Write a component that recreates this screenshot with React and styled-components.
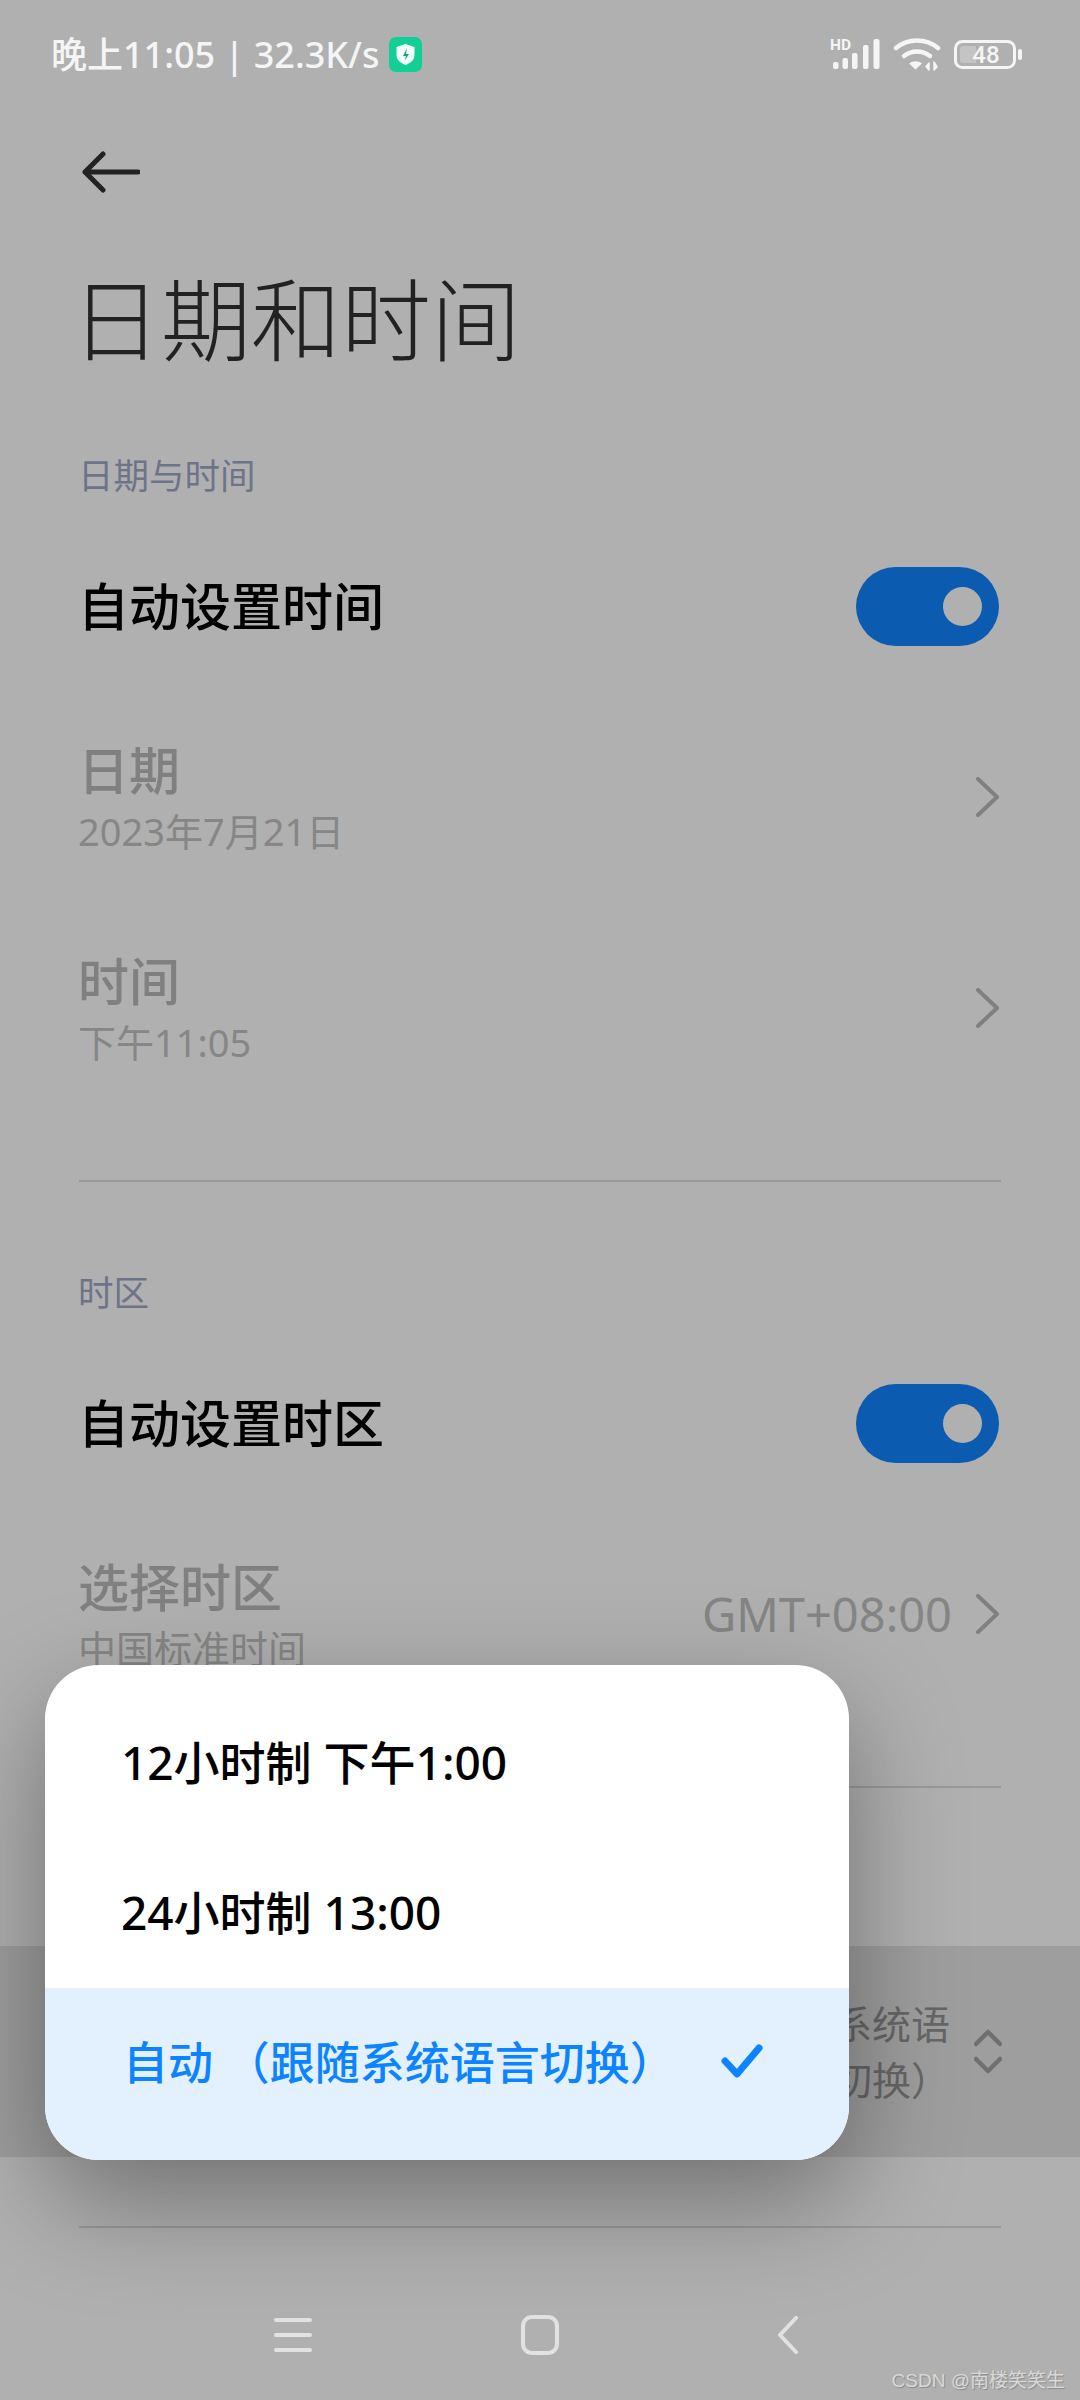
import React from 'react'
import styled, { createGlobalStyle } from 'styled-components'

const GlobalStyle = createGlobalStyle`
  html, body {
    margin: 0;
    padding: 0;
    background: #b0b0b0;
  }
`

const Page = styled.div`
  position: relative;
  width: 1080px;
  height: 2400px;
  overflow: hidden;
  background: #b0b0b0;
  font-family: "Noto Sans", "Noto Sans CJK SC", sans-serif;
`

const StatusBar = styled.div`
  height: 108px;
  padding: 0 52px 0 51px;
  display: flex;
  align-items: center;
  justify-content: space-between;
  color: #f5f5f5;
`

const StatusLeft = styled.div`
  display: flex;
  align-items: center;
  gap: 10px;
  font-size: 36px;
  font-weight: 500;
  white-space: nowrap;
`

const StatusText = styled.span`
  margin-bottom: 4px;
`

const StatusIcons = styled.div`
  display: flex;
  align-items: center;
  margin-right: 4px;
  gap: 13px;
`

const BackRow = styled.div`
  height: 128px;
  padding-left: 82px;
  display: flex;
  align-items: center;
`

const Title = styled.h1`
  margin: 0;
  height: 170px;
  padding-left: 71px;
  font-size: 90px;
  font-weight: 300;
  line-height: 167px;
  color: #222;
`

const SectionLabel = styled.div`
  height: 70px;
  margin: ${p => p.$top}px 0 5px;
  padding-left: 78px;
  font-size: 35.5px;
  line-height: 67px;
  color: #6e7488;
`

const Row = styled.div`
  height: ${p => p.$height}px;
  padding: 0 81px 0 78px;
  display: flex;
  align-items: center;
  justify-content: space-between;
`

const RowTitle = styled.div`
  font-size: 51px;
  font-weight: 500;
  line-height: 61px;
  color: ${p => (p.$muted ? '#808080' : '#000')};
`

const RowSub = styled.div`
  font-size: 38px;
  line-height: 61px;
  color: #868686;
  white-space: nowrap;
`

const RowEnd = styled.div`
  display: flex;
  align-items: center;
  gap: 24px;
  margin-bottom: 8px;
`

const RowValue = styled.span`
  font-size: 47px;
  color: #858585;
`

const Toggle = styled.div`
  width: 143px;
  height: 79px;
  padding-right: 17px;
  box-sizing: border-box;
  border-radius: 40px;
  background: #0b5cb1;
  display: flex;
  align-items: center;
  justify-content: flex-end;
`

const Knob = styled.div`
  width: 39px;
  height: 39px;
  border-radius: 50%;
  background: #b0b0b0;
`

const Divider = styled.div`
  height: 2px;
  margin: ${p => p.$top}px 79px 0 79px;
  background: #999;
`

const Band = styled.div`
  height: 211px;
  margin-top: 158px;
  padding: 0 78px 0 80px;
  display: flex;
  align-items: center;
  justify-content: flex-end;
  gap: 24px;
  background: #9e9e9e;
`

const BandText = styled.div`
  width: 320px;
  font-size: 39px;
  line-height: 56px;
  text-align: right;
  color: #666;
`

const NavBar = styled.div`
  height: 90px;
  margin-top: 62px;
  position: relative;
  display: flex;
  align-items: center;
  padding-left: 274px;
`

const NavSlot = styled.div`
  display: flex;
  margin-left: ${p => p.$left}px;
`

const Watermark = styled.div`
  position: absolute;
  right: 15px;
  bottom: 8px;
  font-family: "Liberation Sans", "Noto Sans CJK SC", sans-serif;
  font-size: 19px;
  color: #d8d8d8;
  text-shadow: 1px 1px 1px #8a8a8a;
`

const Popup = styled.div`
  position: absolute;
  left: 45px;
  top: 1665px;
  width: 804px;
  height: 495px;
  padding-top: 20px;
  box-sizing: border-box;
  border-radius: 54px;
  overflow: hidden;
  background: #fff;
`

const PopupShadow = styled.div`
  position: absolute;
  left: 45px;
  top: 1665px;
  width: 804px;
  height: 495px;
  border-radius: 54px;
  box-shadow: 0 40px 110px rgba(0, 0, 0, 0.36);
`

const Option = styled.div`
  height: ${p => (p.$active ? 172 : 150)}px;
  margin-top: ${p => (p.$active ? 3 : 0)}px;
  padding: ${p => (p.$active ? '0 86px 27px 78px' : '0 80px 0 76px')};
  box-sizing: border-box;
  display: flex;
  align-items: center;
  justify-content: space-between;
  font-size: ${p => (p.$active ? 45 : 46)}px;
  font-weight: 500;
  white-space: pre;
  color: ${p => (p.$active ? '#0d84ff' : '#000')};
  background: ${p => (p.$active ? '#e3f1ff' : 'transparent')};
`

const Shield = () => (
  <svg width="33" height="35" viewBox="0 0 33 35">
    <rect width="33" height="35" rx="7" fill="#12cf95" />
    <path d="M16.5 7l9 3v8c0 5-4 8-9 10-5-2-9-5-9-10v-8z" fill="#f2fffa" />
    <path d="M18 11l-4 8h3l-1.500 5 4.500-7h-3z" fill="#12a87c" />
  </svg>
)

const Signal = () => (
  <svg width="50" height="32" viewBox="0 0 50 32" overflow="visible">
    <text x="0" y="11.500" fontFamily="Roboto, sans-serif" fontWeight="700" fontSize="15.500" fill="#f5f5f5">HD</text>
    <g fill="#f5f5f5">
      <rect x="3" y="24" width="5.500" height="7" rx="2" />
      <rect x="12.500" y="20" width="5.500" height="11" rx="2" />
      <rect x="22" y="15" width="5.500" height="16" rx="2" />
      <rect x="33" y="7" width="5.500" height="24" rx="2" />
      <rect x="43.500" y="1" width="6" height="30" rx="2" />
    </g>
  </svg>
)

const Wifi = () => (
  <svg width="48" height="34" viewBox="0 0 48 34" fill="none">
    <g stroke="#f5f5f5" strokeWidth="4.500" strokeLinecap="round">
      <path d="M3 11c12-10 30-10 42 0" />
      <path d="M11 19c8-6 18-6 26 0" />
    </g>
    <path d="M16 26.500c4-3 9-3 13 0l-6.500 6z" fill="#f5f5f5" />
    <path d="M36 33v-7l-3 3.500zM41 25v8l3-3z" fill="#f5f5f5" stroke="#f5f5f5" strokeWidth="1.500" strokeLinejoin="round" />
  </svg>
)

const Battery = () => (
  <svg width="70" height="29" viewBox="0 0 70 29" overflow="visible">
    <rect x="1.500" y="1.500" width="59" height="26" rx="7" fill="none" stroke="#f5f5f5" strokeWidth="3" />
    <path d="M9 6h13v17h-13a3 3 0 0 1-3-3v-11a3 3 0 0 1 3-3z" fill="#c4c4c4" />
    <rect x="64" y="9" width="4" height="11" rx="2" fill="#f5f5f5" />
    <text x="32" y="22.500" textAnchor="middle" fontFamily="Roboto, sans-serif" fontWeight="500" fontSize="24" fill="#f5f5f5">48</text>
  </svg>
)

const BackArrow = () => (
  <svg width="58" height="42" viewBox="0 0 58 42" fill="none" stroke="#222" strokeWidth="5" strokeLinecap="round" strokeLinejoin="round">
    <path d="M21 3L3 21l18 18M3 21h53" />
  </svg>
)

const Chevron = () => (
  <svg width="23" height="40" viewBox="0 0 23 40" fill="none" stroke="#808080" strokeWidth="4" strokeLinecap="round" strokeLinejoin="round">
    <path d="M2 2l19 18L2 38" />
  </svg>
)

const UpDown = () => (
  <svg width="28" height="45" viewBox="0 0 28 45" fill="none" stroke="#707070" strokeWidth="4.500" strokeLinecap="round" strokeLinejoin="round">
    <path d="M2 15L14 3l12 12M2 30l12 12 12-12" />
  </svg>
)

const Check = () => (
  <svg width="42" height="34" viewBox="0 0 42 34" fill="none" stroke="#0d84ff" strokeWidth="7" strokeLinecap="round" strokeLinejoin="round">
    <path d="M4 17l12 13L38 4" />
  </svg>
)

const NavMenu = () => (
  <svg width="38" height="36" viewBox="0 0 38 36" fill="none" stroke="#e2e2e2" strokeWidth="4" strokeLinecap="round">
    <path d="M2 3h34M2 18h34M2 33h34" />
  </svg>
)

const NavHome = () => (
  <svg width="38" height="40" viewBox="0 0 38 40" fill="none" stroke="#e2e2e2" strokeWidth="4">
    <rect x="2" y="2" width="34" height="36" rx="9" />
  </svg>
)

const NavBack = () => (
  <svg width="22" height="38" viewBox="0 0 22 38" fill="none" stroke="#e2e2e2" strokeWidth="4" strokeLinecap="round" strokeLinejoin="round">
    <path d="M19 2L3 19l16 17" />
  </svg>
)

const SwitchRow = ({ label }) => (
  <Row $height={178}>
    <RowTitle>{label}</RowTitle>
    <Toggle><Knob /></Toggle>
  </Row>
)

const LinkRow = ({ label, sub, value }) => (
  <Row $height={211}>
    <div>
      <RowTitle $muted>{label}</RowTitle>
      <RowSub>{sub}</RowSub>
    </div>
    <RowEnd>
      {value && <RowValue>{value}</RowValue>}
      <Chevron />
    </RowEnd>
  </Row>
)

export default function App() {
  return (
    <Page>
      <GlobalStyle />
      <StatusBar>
        <StatusLeft>
          <StatusText>晚上11:05 | 32.3K/s</StatusText>
          <Shield />
        </StatusLeft>
        <StatusIcons>
          <Signal />
          <Wifi />
          <Battery />
        </StatusIcons>
      </StatusBar>
      <BackRow><BackArrow /></BackRow>
      <Title>日期和时间</Title>

      <SectionLabel $top={36}>日期与时间</SectionLabel>
      <SwitchRow label="自动设置时间" />
      <LinkRow label="日期" sub="2023年7月21日" />
      <LinkRow label="时间" sub="下午11:05" />
      <Divider $top={63} />

      <SectionLabel $top={77}>时区</SectionLabel>
      <SwitchRow label="自动设置时区" />
      <LinkRow label="选择时区" sub="中国标准时间" value="GMT+08:00" />
      <Divider $top={63} />

      <Band>
        <BandText>自动（跟随系统语言切换）</BandText>
        <UpDown />
      </Band>
      <Divider $top={69} />

      <NavBar>
        <NavMenu />
        <NavSlot $left={209}><NavHome /></NavSlot>
        <NavSlot $left={218}><NavBack /></NavSlot>
      </NavBar>
      <Watermark>CSDN @南楼笑笑生</Watermark>

      <PopupShadow />
      <Popup>
        <Option>12小时制 下午1:00</Option>
        <Option>24小时制 13:00</Option>
        <Option $active>
          <span>自动 （跟随系统语言切换）</span>
          <Check />
        </Option>
      </Popup>
    </Page>
  )
}
